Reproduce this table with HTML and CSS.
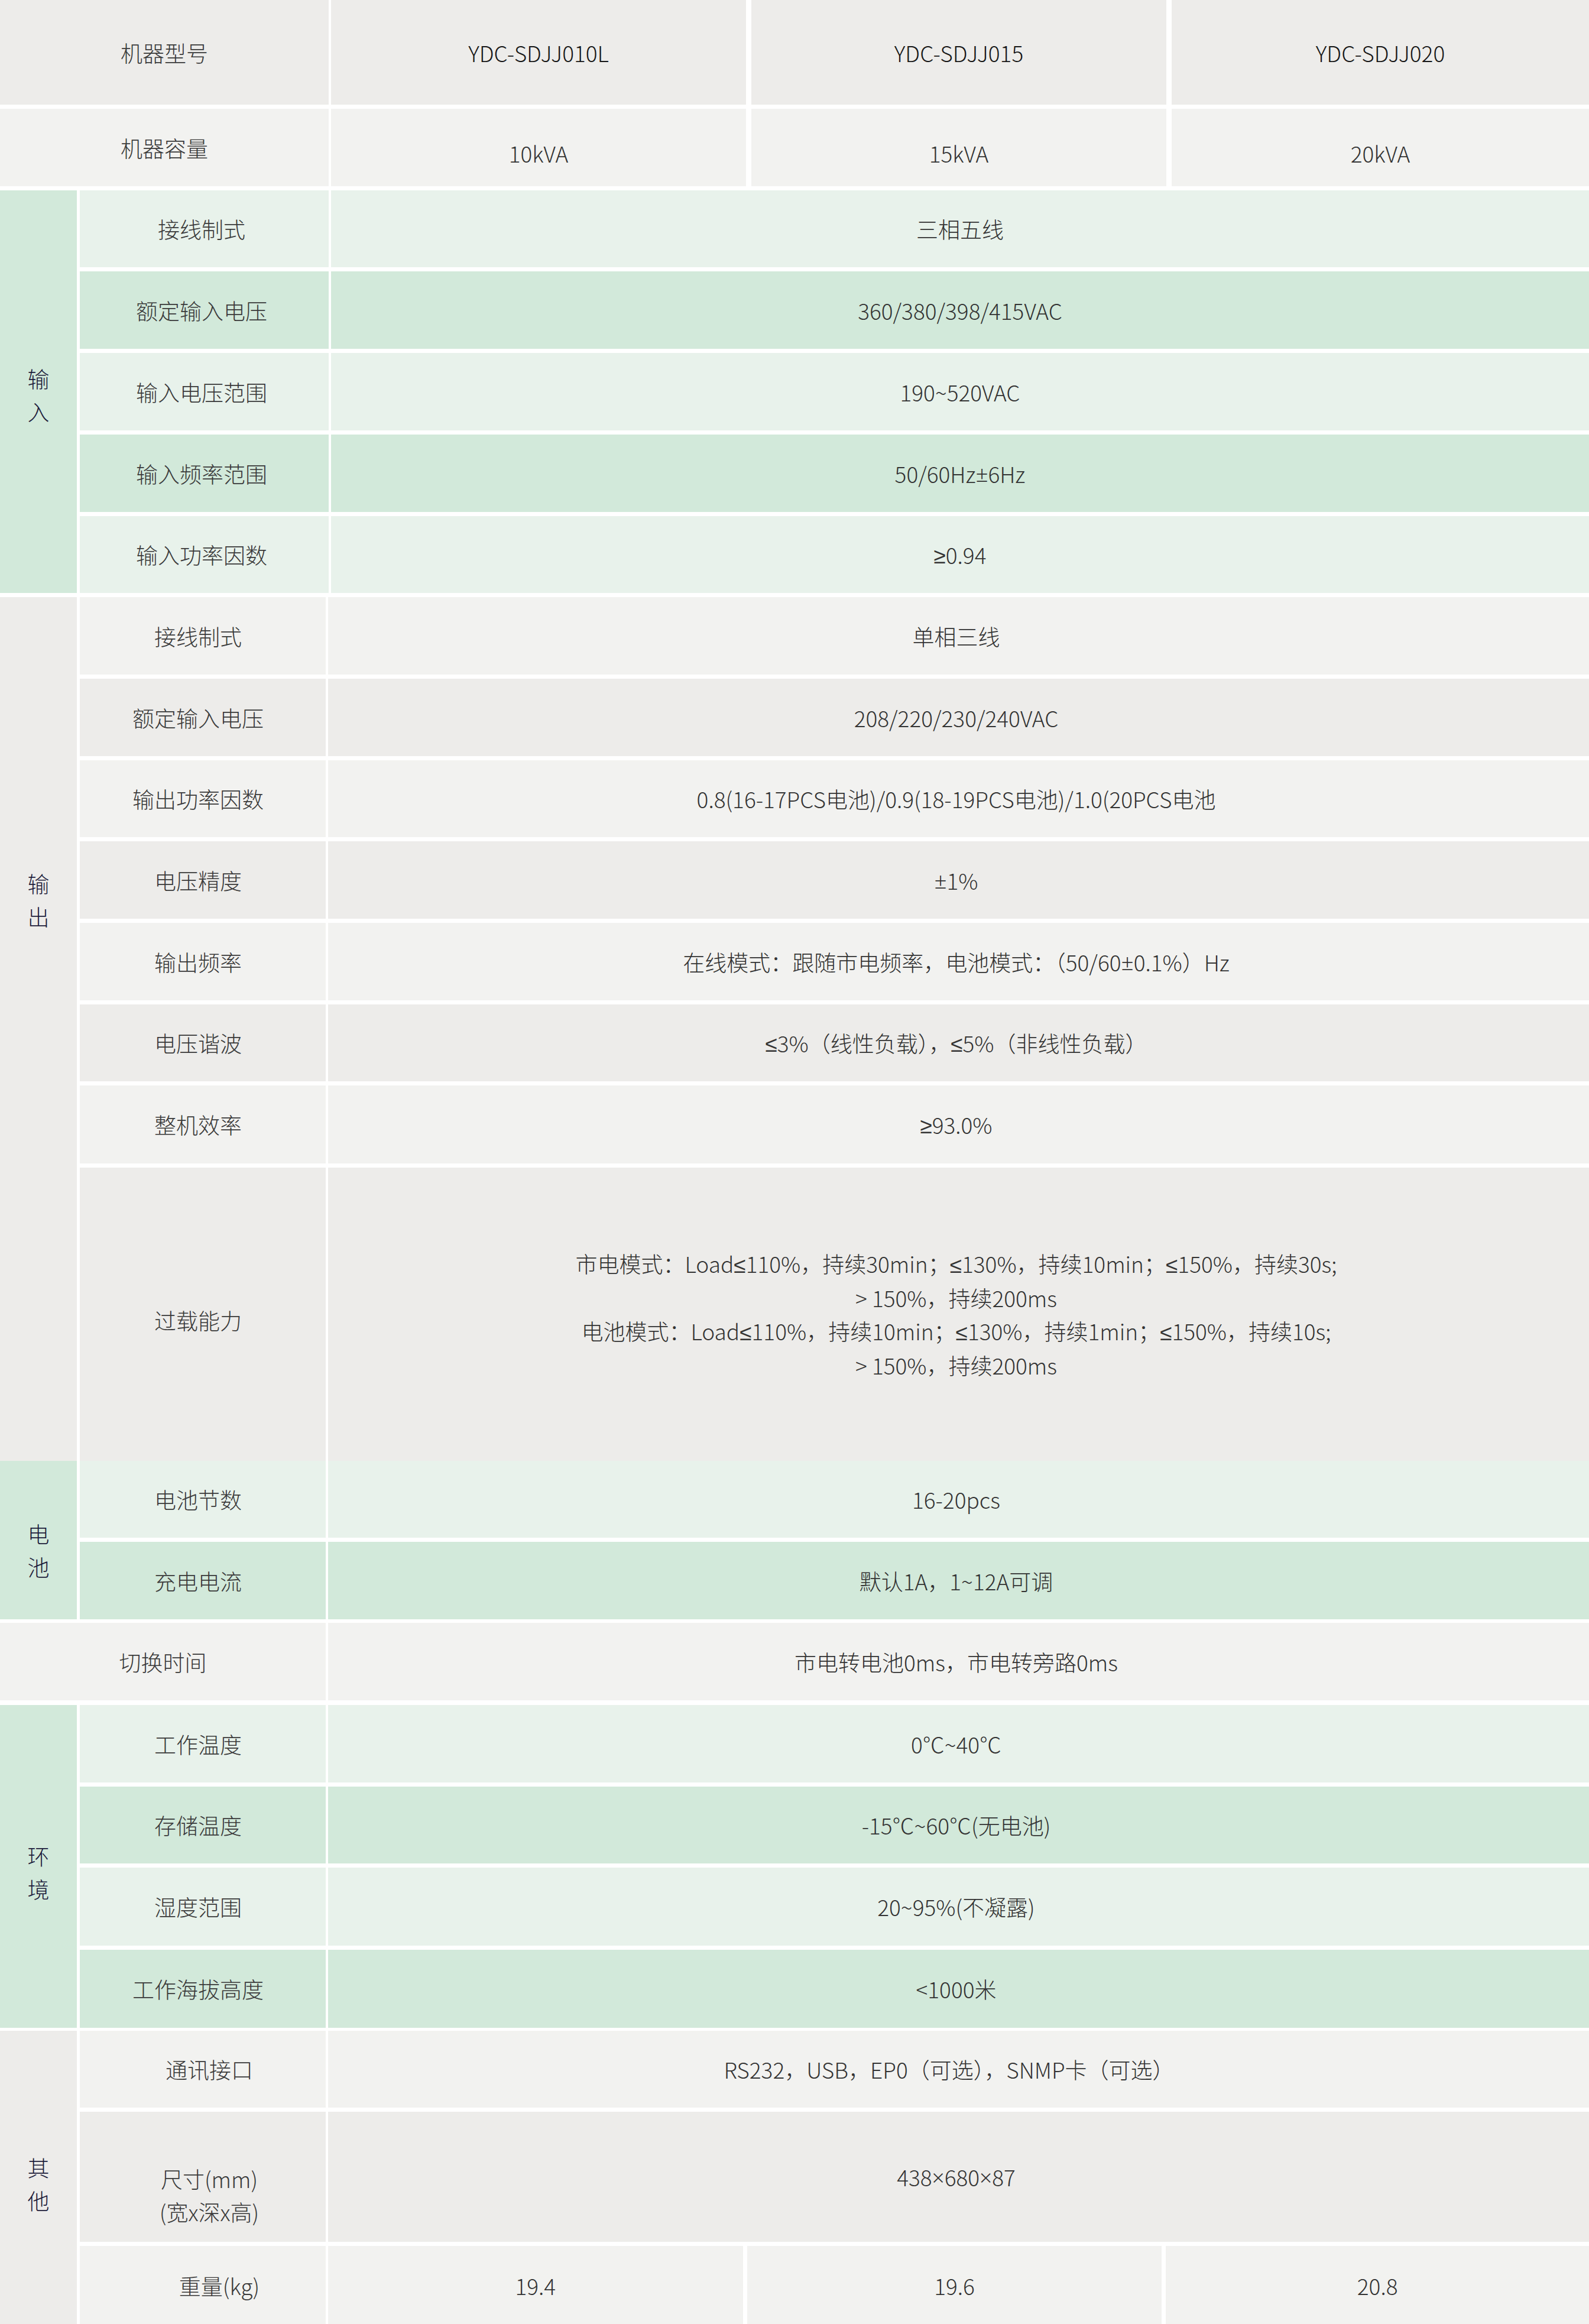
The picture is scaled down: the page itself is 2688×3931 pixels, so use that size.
FILE: index.html
```html
<!DOCTYPE html>
<html lang="zh-CN">
<head>
<meta charset="utf-8">
<title>规格参数</title>
<link rel="stylesheet" href="styles.css">
</head>
<body>
<div class="spec">
  <div class="row head">
    <div class="cell lab-wide">机器型号</div>
    <div class="cell model">YDC-SDJJ010L</div>
    <div class="cell model">YDC-SDJJ015</div>
    <div class="cell model model-last">YDC-SDJJ020</div>
  </div>
  <div class="row cap">
    <div class="cell lab-wide">机器容量</div>
    <div class="cell model">10kVA</div>
    <div class="cell model">15kVA</div>
    <div class="cell model model-last">20kVA</div>
  </div>

  <section class="group green sec-in">
    <div class="gname gname-in"><span class="gtxt">输入</span></div>
    <div class="rows">
      <div class="r h130 gl"><div class="lab lab-in">接线制式</div><div class="val val-in">三相五线</div></div>
      <div class="r gm"><div class="lab lab-in">额定输入电压</div><div class="val val-in">360/380/398/415VAC</div></div>
      <div class="r gl"><div class="lab lab-in">输入电压范围</div><div class="val val-in">190~520VAC</div></div>
      <div class="r gm"><div class="lab lab-in">输入频率范围</div><div class="val val-in">50/60Hz<span class="sym">±</span>6Hz</div></div>
      <div class="r h130 gl"><div class="lab lab-in">输入功率因数</div><div class="val val-in"><span class="sym">≥</span>0.94</div></div>
    </div>
  </section>

  <section class="group gray sec-out">
    <div class="gname gname-out"><span class="gtxt">输出</span></div>
    <div class="rows">
      <div class="r yl"><div class="lab">接线制式</div><div class="val">单相三线</div></div>
      <div class="r ym"><div class="lab">额定输入电压</div><div class="val">208/220/230/240VAC</div></div>
      <div class="r h130 yl"><div class="lab">输出功率因数</div><div class="val">0.8(16-17PCS电池)/0.9(18-19PCS电池)/1.0(20PCS电池</div></div>
      <div class="r ym"><div class="lab">电压精度</div><div class="val"><span class="sym">±</span>1%</div></div>
      <div class="r yl"><div class="lab">输出频率</div><div class="val">在线模式：跟随市电频率，电池模式：（50/60<span class="sym">±</span>0.1%）Hz</div></div>
      <div class="r h130 ym"><div class="lab">电压谐波</div><div class="val"><span class="sym">≤</span>3%（线性负载），<span class="sym">≤</span>5%（非线性负载）</div></div>
      <div class="r h132 yl"><div class="lab">整机效率</div><div class="val"><span class="sym">≥</span>93.0%</div></div>
      <div class="r hover ym"><div class="lab lab-over">过载能力</div><div class="val multi"><span>市电模式：Load<span class="sym">≤</span>110%，持续30min；<span class="sym">≤</span>130%，持续10min；<span class="sym">≤</span>150%，持续30s;</span><span>&gt; 150%，持续200ms</span><span>电池模式：Load<span class="sym">≤</span>110%，持续10min；<span class="sym">≤</span>130%，持续1min；<span class="sym">≤</span>150%，持续10s;</span><span>&gt; 150%，持续200ms</span></div></div>
    </div>
  </section>

  <section class="group green sec-bat">
    <div class="gname gname-bat"><span class="gtxt">电池</span></div>
    <div class="rows">
      <div class="r h130 gl"><div class="lab">电池节数</div><div class="val">16-20pcs</div></div>
      <div class="r gm"><div class="lab">充电电流</div><div class="val">默认1A，1~12A可调</div></div>
    </div>
  </section>

  <div class="row single yl sec-sw">
    <div class="lab lab-span">切换时间</div>
    <div class="val">市电转电池0ms，市电转旁路0ms</div>
  </div>

  <section class="group green sec-env">
    <div class="gname"><span class="gtxt">环境</span></div>
    <div class="rows">
      <div class="r gl"><div class="lab">工作温度</div><div class="val">0℃~40℃</div></div>
      <div class="r h130 gm"><div class="lab">存储温度</div><div class="val">-15℃~60℃(无电池)</div></div>
      <div class="r h132 gl"><div class="lab">湿度范围</div><div class="val">20~95%(不凝露)</div></div>
      <div class="r h132 gm"><div class="lab">工作海拔高度</div><div class="val">&lt;1000米</div></div>
    </div>
  </section>

  <section class="group gray sec-oth">
    <div class="gname"><span class="gtxt">其他</span></div>
    <div class="rows">
      <div class="r h130 yl"><div class="lab lab-shift">通讯接口</div><div class="val val-shift">RS232，USB，EP0（可选），SNMP卡（可选）</div></div>
      <div class="r hdim ym"><div class="lab lab-shift lab-dim"><span>尺寸(mm)</span><span>(宽x深x高)</span></div><div class="val">438<span class="sym">×</span>680<span class="sym">×</span>87</div></div>
      <div class="r hlast yl"><div class="lab lab-weight">重量(kg)</div><div class="val three"><span>19.4</span><span>19.6</span><span>20.8</span></div></div>
    </div>
  </section>
</div>
</body>
</html>
```

FILE: styles.css
```css
* { box-sizing: border-box; }
html, body { margin: 0; padding: 0; background: #ffffff; }
body {
  width: 2688px;
  font-family: "Noto Sans CJK SC", "Noto Sans", sans-serif;
  font-weight: 300;
  font-size: 37px;
  color: #333333;
}
.spec { display: flex; flex-direction: column; width: 2688px; }

.row { display: flex; }
.cell, .lab, .val, .gname {
  display: flex; align-items: center; justify-content: center; text-align: center;
}
.sym { font-family: "Noto Sans", "DejaVu Sans", sans-serif; font-weight: 300; }

.head { height: 177px; gap: 4px; }
.head .cell { background: #edecea; }
.cap { height: 131px; margin-top: 7px; gap: 4px; }
.cap .cell { background: #f2f2f0; }
.cap .model { padding-top: 18px; }
.lab-wide { width: 556px; flex: none; color: #3a3a3a; }
.model { width: 702px; flex: none; margin-right: 5px; }
.model-last { flex: 1; margin-right: 0; }
.head .model { color: #161616; }

.group { display: flex; gap: 5px; }
.gname {
  width: 130px; flex: none;
  color: #1d1c3b; padding-top: 20px;
}
.gtxt { display: block; width: 37px; line-height: 56px; text-align: center; }
.green > .gname { background: #d2e9da; }
.gray > .gname { background: #edecea; }
.gname-in { padding-top: 10px; }
.gname-bat { padding-top: 34px; }
.gname-out { align-items: flex-start; padding-top: 456px; }

.rows { flex: 1; display: flex; flex-direction: column; gap: 7px; }
.r { display: flex; gap: 4px; height: 131px; }
.h130 { height: 130px; }
.h132 { height: 132px; }
.hover { height: 496px; }
.hdim { height: 220px; }
.hlast { height: 133px; }

.lab { width: 416px; flex: none; color: #3a3a3a; padding-right: 16px; }
.lab-in { width: 421px; padding-right: 9px; }
.lab-over { padding-top: 20px; }
.val { flex: 1; padding-right: 8px; }
.val-in { padding-right: 0; }

.gl > .lab, .gl > .val { background: #e8f2eb; }
.gm > .lab, .gm > .val { background: #d2e9da; }
.yl > .lab, .yl > .val { background: #f2f2f0; }
.ym > .lab, .ym > .val { background: #edecea; }

.multi { line-height: 56px; flex-direction: column; }
.multi > span { display: block; }
.lab-shift { padding-left: 22px; padding-right: 0; }
.lab-dim { flex-direction: column; line-height: 56px; padding-top: 62px; }
.lab-dim > span { display: block; }
.lab-weight { padding-left: 56px; padding-right: 0; }
.val-shift { padding-right: 32px; }

.three { gap: 7px; padding-right: 0; background: transparent !important; }
.three span {
  flex: 1; height: 100%; display: flex; align-items: center; justify-content: center;
  background: #f2f2f0;
}
.three span:last-child { flex: 1.02; }

.sec-in { margin-top: 7px; }
.sec-out { margin-top: 7px; }
.sec-bat { margin-top: 0; }
.sec-sw { margin-top: 6px; height: 131px; gap: 4px; }
.lab-span { width: 551px; padding-right: 0; }
.sec-env { margin-top: 8px; }
.sec-oth { margin-top: 5px; }
```
